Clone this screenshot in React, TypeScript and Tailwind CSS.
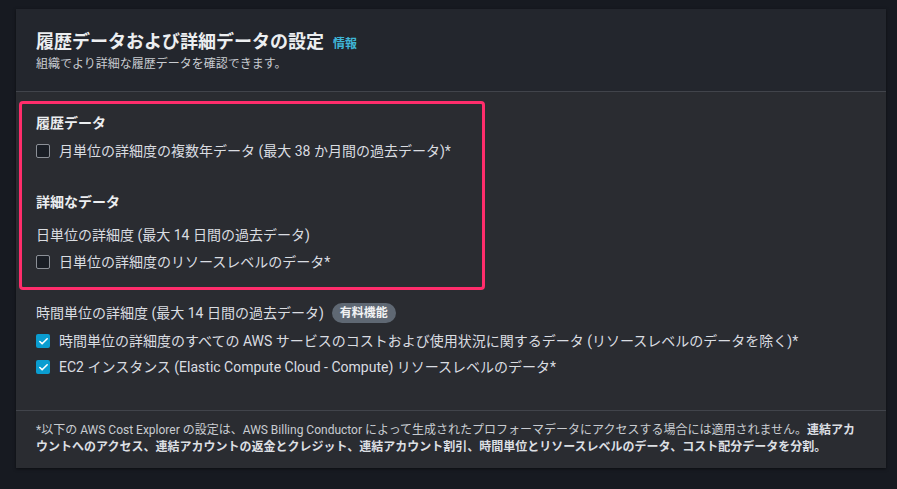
import { Check } from "lucide-react";

const font = {
  fontFamily: 'Roboto, "Noto Sans CJK JP", sans-serif',
};

function Box({ checked }: { checked?: boolean }) {
  return checked ? (
    <span className="flex h-[14px] w-[14px] shrink-0 items-center justify-center rounded-[2px] bg-[#0a9dd0]">
      <Check size={11} strokeWidth={3.5} className="text-white" />
    </span>
  ) : (
    <span className="h-[14px] w-[14px] shrink-0 rounded-[2px] border border-[#8c9097] bg-[#1a1e25]" />
  );
}

function Row({ checked, children }: { checked?: boolean; children: React.ReactNode }) {
  return (
    <label className="flex h-5 items-center gap-[9px] text-[14px] leading-5 text-[#dadde1]">
      <Box checked={checked} />
      <span>{children}</span>
    </label>
  );
}

export default function App() {
  return (
    <div className="min-h-[489px] w-[897px] bg-[#171a21] pt-[9px] pl-4" style={font}>
      <section className="w-[870px] bg-[#2a2c31] shadow-[0_1px_3px_rgba(0,0,0,0.5)]">
        <header className="border-b border-[#41444b] bg-[#23262d] px-5 pt-[21px] pb-[19px]">
          <h1 className="flex h-6 items-center gap-[9px] text-[18px] font-bold leading-6 text-[#eceef0]">
            履歴データおよび詳細データの設定
            <a className="pt-[3px] text-[12px] font-bold text-[#3fb5d7]">情報</a>
          </h1>
          <p className="mt-[2px] text-[12px] leading-4 text-[#c9ccd1]">
            組織でより詳細な履歴データを確認できます。
          </p>
        </header>

        <div className="px-[3px] pt-[9px]">
          <div className="w-[466px] rounded-[4px] border-[3px] border-[#ff2d6b] pt-[9px] pb-[15px] pl-[14px]">
            <h2 className="text-[14px] font-bold leading-5 text-[#eceef0]">履歴データ</h2>
            <div className="mt-2">
              <Row>月単位の詳細度の複数年データ (最大 38 か月間の過去データ)*</Row>
            </div>
            <h2 className="mt-[31px] text-[14px] font-bold leading-5 text-[#eceef0]">詳細なデータ</h2>
            <p className="mt-[13px] text-[14px] leading-5 text-[#dadde1]">
              日単位の詳細度 (最大 14 日間の過去データ)
            </p>
            <div className="mt-[7px]">
              <Row>日単位の詳細度のリソースレベルのデータ*</Row>
            </div>
          </div>

          <div className="pl-[17px] pt-[13px] pb-[33px]">
            <div className="flex h-5 items-center gap-2 text-[14px] leading-5 text-[#dadde1]">
              時間単位の詳細度 (最大 14 日間の過去データ)
              <span className="rounded-full bg-[#5f6873] px-2 text-[12px] font-bold leading-[20px] text-[#f2f3f4]">
                有料機能
              </span>
            </div>
            <div className="mt-2 flex flex-col gap-[6px]">
              <Row checked>
                時間単位の詳細度のすべての AWS サービスのコストおよび使用状況に関するデータ (リソースレベルのデータを除く)*
              </Row>
              <Row checked>EC2 インスタンス (Elastic Compute Cloud - Compute) リソースレベルのデータ*</Row>
            </div>
          </div>
        </div>

        <footer className="border-t border-[#41444b] px-5 pt-[11px] pb-3 text-[12px] leading-[17px] text-[#c9ccd1]">
          <p className="w-[826px]">
            *以下の AWS Cost Explorer の設定は、AWS Billing Conductor によって生成されたプロフォーマデータにアクセスする場合には適用されません。
            <b className="text-[#dcdfe3]">
              連結アカウントへのアクセス、連結アカウントの返金とクレジット、連結アカウント割引、時間単位とリソースレベルのデータ、コスト配分データを分割。
            </b>
          </p>
        </footer>
      </section>
    </div>
  );
}
